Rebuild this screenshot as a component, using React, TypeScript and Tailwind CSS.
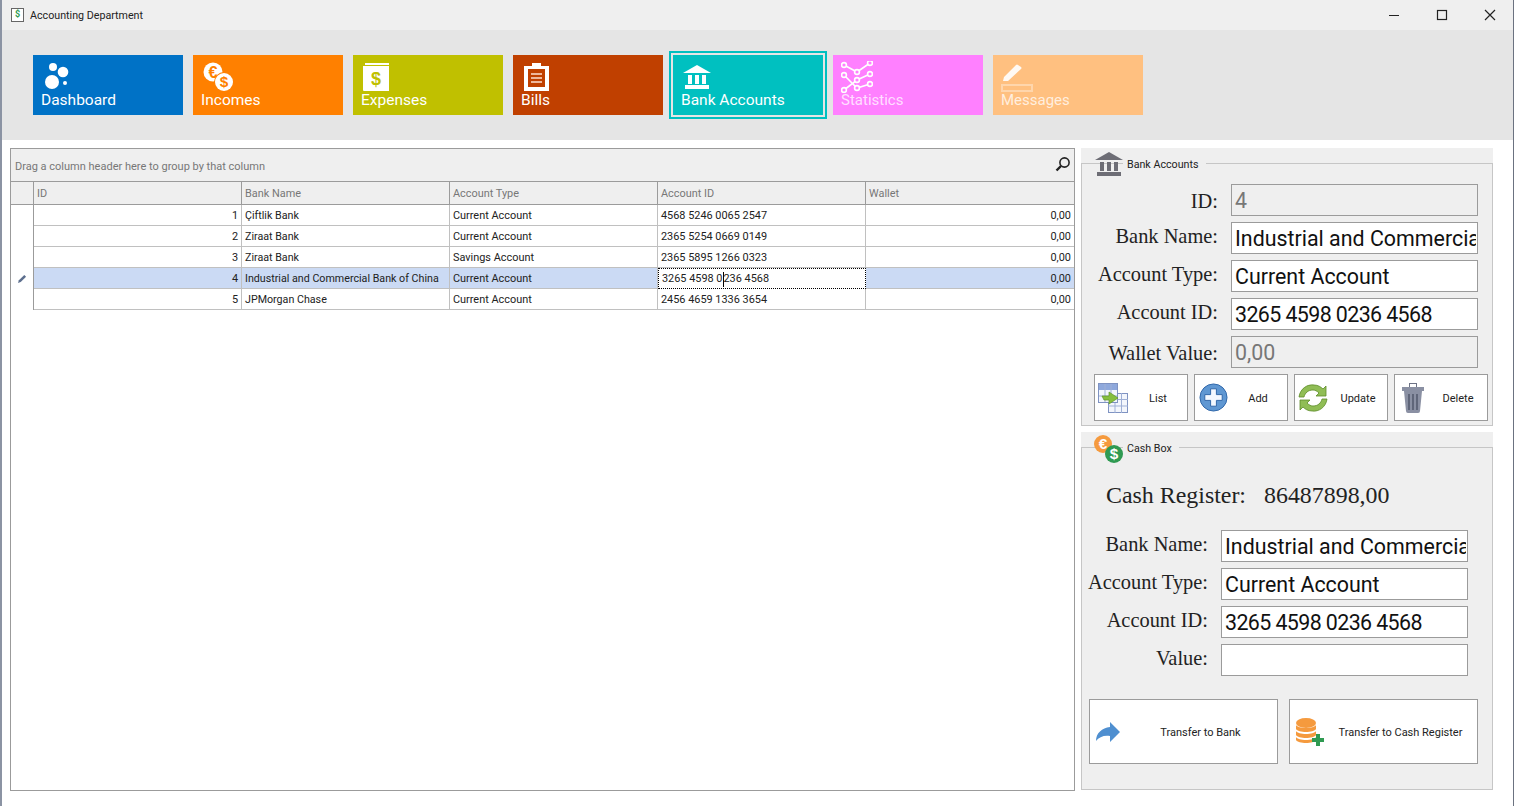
import type { ReactNode } from "react";

const uiFont = "font-['Roboto',sans-serif]";
const serifFont = "font-['Liberation_Serif',serif]";

const rows = [
  { id: 1, bank: "Çiftlik Bank", type: "Current Account", account: "4568 5246 0065 2547" },
  { id: 2, bank: "Ziraat Bank", type: "Current Account", account: "2365 5254 0669 0149" },
  { id: 3, bank: "Ziraat Bank", type: "Savings Account", account: "2365 5895 1266 0323" },
  { id: 4, bank: "Industrial and Commercial Bank of China", type: "Current Account", account: "3265 4598 0236 4568" },
  { id: 5, bank: "JPMorgan Chase", type: "Current Account", account: "2456 4659 1336 3654" }
];

const gridCols = "grid grid-cols-[23px_208px_208px_208px_208px_1fr]";

function Coin({ cx, cy, r, fill, ink, glyph }: { cx: number; cy: number; r: number; fill: string; ink: string; glyph: string }) {
  return (
    <g>
      <circle cx={cx} cy={cy} r={r} fill={fill} />
      <text x={cx} y={cy + r * 0.6} textAnchor="middle" fontSize={r * 1.7} fontWeight="700" fontFamily="Liberation Sans" fill={ink}>
        {glyph}
      </text>
    </g>
  );
}

function BankIcon({ color, className }: { color: string; className: string }) {
  return (
    <svg viewBox="0 0 28 24" className={className} fill={color}>
      <path d="M14 0 28 8H0Z" />
      <rect x="5" y="10" width="4" height="9" />
      <rect x="12" y="10" width="4" height="9" />
      <rect x="19" y="10" width="4" height="9" />
      <rect x="2" y="20" width="24" height="4" />
    </svg>
  );
}

function StatsIcon() {
  const nodes = [[3, 4], [16, 11], [29, 2], [3, 14], [16, 27], [29, 23], [3, 29], [16, 19], [29, 13]];
  return (
    <svg viewBox="0 0 32 32" className="ml-0 h-8 w-8 shrink-0" fill="none" stroke="white" strokeWidth="1.6">
      <path d="M3 4 16 11 29 2M3 14 16 27 29 23M3 29 16 19 29 13" />
      {nodes.map(([x, y]) => (
        <circle key={`${x}-${y}`} cx={x} cy={y} r="2.4" fill="#ff80ff" />
      ))}
    </svg>
  );
}

function Tile({ label, color, icon, active }: { label: string; color: string; icon: ReactNode; active?: boolean }) {
  return (
    <div className={`flex h-[60px] w-[150px] flex-col pl-2 text-white ${color} ${active ? "outline-2 outline-offset-2 outline-[#00c0c0]" : ""}`}>
      <div className="mt-[8px] flex h-[28px] items-center">{icon}</div>
      <div className={`mt-[-1px] text-[15.5px] leading-[20px] ${label === "Statistics" || label === "Messages" ? "text-[15px] text-white/75" : ""}`}>{label}</div>
    </div>
  );
}

function Field({ label, value, disabled, numeric }: { label: string; value: string; disabled?: boolean; numeric?: boolean }) {
  return (
    <div className="flex h-[32px] items-center justify-end gap-[13px]">
      <span className={`${serifFont} text-[20.4px] text-[#222] ${disabled ? "pt-[2px]" : "pb-[3px]"}`}>{label}</span>
      <input
        readOnly
        value={value}
        className={`h-[32px] w-[247px] border border-[#9b9b9b] pl-[3px] pr-[1px] pt-[2px] text-[21.4px] outline-none ${numeric ? "tracking-[-0.6px]" : ""} ${disabled ? "bg-[#efefef] text-[#777]" : "bg-white text-[#111]"}`}
      />
    </div>
  );
}

function GroupBox({ title, icon, className, children }: { title: string; icon: ReactNode; className: string; children: ReactNode }) {
  return (
    <section className={`relative bg-[#efefef] pt-[15px] ${className}`}>
      <div className="absolute left-[12px] top-0 flex h-[30px] items-start">
        {icon}
        <span className="mt-[9px] bg-[#efefef] pl-[4px] pr-[7px] pt-[1px] text-[10.7px] leading-[14px] text-[#222]">{title}</span>
      </div>
      <div className="h-full border border-[#c6c6c6]">{children}</div>
    </section>
  );
}

function ActionButton({ label, icon }: { label: string; icon: ReactNode }) {
  return (
    <button className="flex h-[47px] w-[94px] items-center border border-[#9b9b9b] bg-white text-[11px] text-[#222]">
      <span className="flex w-[36px] shrink-0 justify-center">{icon}</span>
      <span className="flex-1 pl-[4px] pr-[6px] pt-[3px] text-center">{label}</span>
    </button>
  );
}

function TransferButton({ label, icon }: { label: string; icon: ReactNode }) {
  return (
    <button className="flex h-[65px] w-[189px] items-center border border-[#9b9b9b] bg-white text-[11px] text-[#222]">
      <span className="flex w-[40px] shrink-0 justify-center">{icon}</span>
      <span className="flex-1 pl-[4px] pr-[10px] pt-[3px] text-center">{label}</span>
    </button>
  );
}

function AccountsGrid() {
  const headCell = "border-r border-[#9b9b9b] px-[3px] pt-[2px] text-[#777]";
  const cell = "border-r border-b border-[#c0c0c0] px-[3px] pt-[2px] truncate";
  return (
    <div className="h-[643px] w-[1065px] border border-[#9b9b9b] text-[10.9px] leading-[18px] text-[#222]">
      <div className="flex h-[33px] items-center justify-between border-b border-[#9b9b9b] bg-[#efefef] pl-[4px] pr-[3px] text-[11px] text-[#777]">
        <span className="pt-[3px]">Drag a column header here to group by that column</span>
        <svg viewBox="0 0 16 16" className="mb-[2px] h-[16px] w-[16px]" fill="none" stroke="#222" strokeWidth="1.6">
          <circle cx="9.5" cy="6.5" r="4.6" />
          <path d="M6 10 1.5 14.5" strokeWidth="2.4" />
        </svg>
      </div>
      <div className={`${gridCols} h-[23px] border-b border-[#9b9b9b] bg-[#efefef] leading-[20px]`}>
        <div className="border-r border-[#9b9b9b]" />
        <div className={headCell}>ID</div>
        <div className={headCell}>Bank Name</div>
        <div className={headCell}>Account Type</div>
        <div className={headCell}>Account ID</div>
        <div className="px-[3px] pt-[2px] text-[#777]">Wallet</div>
      </div>
      {rows.map((row) => {
        const selected = row.id === 4;
        const bg = selected ? "bg-[#cbdaf4]" : "bg-white";
        return (
          <div key={row.id} className={`${gridCols} h-[21px]`}>
            <div className="flex items-center justify-center border-r border-[#9b9b9b]">
              {selected && (
                <svg viewBox="0 0 10 10" className="h-[9px] w-[9px]" fill="#5d6f8e">
                  <path d="M0 10 1 7 7 1 9 3 3 9Z" />
                </svg>
              )}
            </div>
            <div className={`${cell} ${bg} text-right`}>{row.id}</div>
            <div className={`${cell} ${bg} text-[10.7px]`}>{row.bank}</div>
            <div className={`${cell} ${bg}`}>{row.type}</div>
            {selected ? (
              <div className="border border-dotted border-black bg-white px-[3px] pt-[1px]">
                3265 4598 0<span className="inline-block h-[15px] w-px bg-black align-middle" />236 4568
              </div>
            ) : (
              <div className={`${cell} ${bg}`}>{row.account}</div>
            )}
            <div className={`border-b border-[#c0c0c0] px-[3px] pt-[2px] text-right ${bg}`}>0,00</div>
          </div>
        );
      })}
    </div>
  );
}

export default function App() {
  return (
    <div className={`${uiFont} h-[806px] w-[1514px] overflow-hidden border-l-2 border-r border-l-[#8b93a3] border-r-[#6b7280] bg-white`}>
      <header className="flex h-[30px] items-center bg-[#efefef] pl-[9px] text-[10.7px] text-[#222]">
        <div className="flex h-[14px] w-[13px] items-center justify-center border border-[#666] bg-white text-[9px] font-bold text-[#2f9a52]">$</div>
        <span className="ml-[6px] pt-[2px]">Accounting Department</span>
        <div className="ml-auto flex items-center">
          <svg viewBox="0 0 12 12" className="h-[12px] w-[12px]" stroke="#222" strokeWidth="1"><path d="M1 6.5h10" /></svg>
          <svg viewBox="0 0 12 12" className="ml-[36px] h-[12px] w-[12px]" fill="none" stroke="#222" strokeWidth="1.2"><rect x="1.5" y="1.5" width="9" height="9" /></svg>
          <svg viewBox="0 0 12 12" className="ml-[36px] mr-[17px] h-[12px] w-[12px]" stroke="#222" strokeWidth="1.2"><path d="M1 1 11 11M11 1 1 11" /></svg>
        </div>
      </header>

      <nav className="flex h-[110px] items-start gap-[10px] bg-[#e5e5e5] pl-[31px] pt-[25px]">
        <Tile
          label="Dashboard"
          color="bg-[#0072c6]"
          icon={
            <svg viewBox="0 0 28 28" className="h-[28px] w-[28px] shrink-0" fill="white">
              <circle cx="11" cy="19" r="7" />
              <circle cx="12" cy="4" r="4" />
              <circle cx="22" cy="9" r="5.3" />
              <circle cx="24" cy="20" r="2" />
            </svg>
          }
        />
        <Tile
          label="Incomes"
          color="bg-[#ff8000]"
          icon={
            <svg viewBox="0 0 30 30" className="ml-[2px] h-[30px] w-[30px] shrink-0">
              <Coin cx={10} cy={10} r={9.5} fill="white" ink="#ff8000" glyph="€" />
              <circle cx={21} cy={20} r={10} fill="#ff8000" />
              <Coin cx={21} cy={20} r={9} fill="white" ink="#ff8000" glyph="$" />
            </svg>
          }
        />
        <Tile
          label="Expenses"
          color="bg-[#c0c000]"
          icon={
            <svg viewBox="0 0 26 28" className="ml-[2px] h-[28px] w-[26px] shrink-0">
              <rect x="2" y="0" width="24" height="2" fill="white" />
              <path d="M0 3h26v25H1q-1 0-1-1Z" fill="white" />
              <text x="13" y="22" textAnchor="middle" fontSize="18" fontWeight="700" fontFamily="Liberation Sans" fill="#c0c000">$</text>
            </svg>
          }
        />
        <Tile
          label="Bills"
          color="bg-[#c04000]"
          icon={
            <svg viewBox="0 0 25 28" className="ml-[3px] h-[28px] w-[25px] shrink-0">
              <path d="M0 3h8V0h9v3h8v25H0Z" fill="white" />
              <rect x="4" y="6" width="17" height="18" fill="#c04000" />
              <rect x="8" y="0" width="9" height="6" fill="white" />
              <path d="M7 11h11M7 15h11M7 19h11" stroke="#eeb79b" strokeWidth="2" />
            </svg>
          }
        />
        <Tile label="Bank Accounts" color="bg-[#00c0c0]" active icon={<BankIcon color="white" className="ml-[2px] h-[24px] w-[28px] shrink-0" />} />
        <Tile label="Statistics" color="bg-[#ff80ff]" icon={<StatsIcon />} />
        <Tile
          label="Messages"
          color="bg-[#ffc080]"
          icon={
            <svg viewBox="0 0 32 28" className="h-[28px] w-[32px] shrink-0 translate-y-[1px]">
              <path d="M2 17 3 13 15 1q1-1 2 0l3 2q1 1 0 2L7 17Z" fill="white" fillOpacity="0.9" />
              <rect x="1" y="21" width="30" height="6" fill="none" stroke="white" strokeOpacity="0.35" strokeWidth="2" />
            </svg>
          }
        />
      </nav>

      <main className="flex gap-[6px] pl-[8px] pt-[8px]">
        <AccountsGrid />
        <aside className="flex w-[412px] flex-col gap-[6px]">
          <GroupBox
            title="Bank Accounts"
            className="h-[278px]"
            icon={
              <div className="ml-[2px] mt-[4px]">
                <BankIcon color="#6d6d75" className="h-[24px] w-[28px]" />
              </div>
            }
          >
            <div className="flex flex-col gap-[6px] pr-[14px] pt-[20px]">
              <Field label="ID:" value="4" disabled />
              <Field label="Bank Name:" value="Industrial and Commercial Bank of China" />
              <Field label="Account Type:" value="Current Account" />
              <Field label="Account ID:" value="3265 4598 0236 4568" numeric />
              <Field label="Wallet Value:" value="0,00" disabled />
            </div>
            <div className="ml-[12px] mt-[6px] flex gap-[6px]">
              <ActionButton
                label="List"
                icon={
                  <svg viewBox="0 0 30 30" className="h-[30px] w-[30px]">
                    <rect x="10.5" y="10.5" width="19" height="19" fill="#f3f6fc" stroke="#7f93c2" />
                    <path d="M10 16.5h20M10 23h20M17 10v20M23.5 10v20" stroke="#9fb0d6" />
                    <rect x="0.5" y="0.5" width="19" height="19" fill="#f3f6fc" stroke="#7f93c2" />
                    <rect x="1" y="1" width="18" height="6" fill="#8ea8dc" />
                    <path d="M1 13h18M7 1v18M13 1v18" stroke="#9fb0d6" />
                    <path d="M4 13h7v-4l9 6-9 6v-4H6Z" fill="#86bf3f" stroke="#5f9428" strokeWidth="0.7" />
                  </svg>
                }
              />
              <ActionButton
                label="Add"
                icon={
                  <svg viewBox="0 0 30 30" className="h-[29px] w-[29px]">
                    <circle cx="15" cy="15" r="14" fill="#5f97d2" stroke="#2f66a8" />
                    <path d="M12 6h6v6h6v6h-6v6h-6v-6H6v-6h6Z" fill="#f3f8ff" stroke="#2f66a8" />
                  </svg>
                }
              />
              <ActionButton
                label="Update"
                icon={
                  <svg viewBox="0 0 30 28" className="h-[28px] w-[30px]" fill="#90bd55" stroke="#5d8c2a" strokeWidth="0.8">
                    <path d="M1 13C2 5 9 0 16 1c4 0 7 2 9 4l3-3v10H18l3-3c-2-2-4-3-6-3-5 0-8 3-9 7Z" />
                    <path d="M29 15c-1 8-8 13-15 12-4 0-7-2-9-4l-3 3V16h10l-3 3c2 2 4 3 6 3 5 0 8-3 9-7Z" />
                  </svg>
                }
              />
              <ActionButton
                label="Delete"
                icon={
                  <svg viewBox="0 0 22 30" className="h-[30px] w-[22px]">
                    <rect x="7.5" y="0.5" width="7" height="4" fill="none" stroke="#6d7386" />
                    <path d="M0 4h22v4H0Z" fill="#8a90a3" />
                    <path d="M2 8h18l-2 20q0 2-2 2H6q-2 0-2-2Z" fill="#8a90a3" />
                    <path d="M7 11v16M11 11v16M15 11v16" stroke="#4f5568" strokeWidth="1.4" />
                  </svg>
                }
              />
            </div>
          </GroupBox>

          <GroupBox
            title="Cash Box"
            className="h-[358px]"
            icon={
              <svg viewBox="0 0 30 30" className="mt-[2px] h-[30px] w-[30px] shrink-0">
                <Coin cx={10} cy={10} r={9} fill="#f59a3e" ink="white" glyph="€" />
                <Coin cx={21} cy={20} r={9} fill="#2f9a52" ink="white" glyph="$" />
              </svg>
            }
          >
            <div className={`${serifFont} flex h-[59px] items-center pl-[24px] pt-[37px] text-[23.9px] text-[#222]`}>
              <span>Cash Register:</span>
              <span className="ml-[18px]">86487898,00</span>
            </div>
            <div className="flex flex-col gap-[6px] pr-[24px] pt-[23px]">
              <Field label="Bank Name:" value="Industrial and Commercial Bank of China" />
              <Field label="Account Type:" value="Current Account" />
              <Field label="Account ID:" value="3265 4598 0236 4568" numeric />
              <Field label="Value:" value="" />
            </div>
            <div className="ml-[7px] mt-[23px] flex gap-[11px]">
              <TransferButton
                label="Transfer to Bank"
                icon={
                  <svg viewBox="0 0 24 20" className="-ml-[4px] h-[20px] w-[24px]">
                    <path d="M14 0 24 10 14 20v-6C8 13 3 15 0 19c0-8 6-13 14-14Z" fill="#4f8fd0" />
                  </svg>
                }
              />
              <TransferButton
                label="Transfer to Cash Register"
                icon={
                  <svg viewBox="0 0 28 28" className="h-[28px] w-[28px]">
                    <ellipse cx="10" cy="5" rx="10" ry="5" fill="#f59a3e" />
                    <path d="M0 7c2 4 18 4 20 0v4c-2 4-18 4-20 0ZM0 13c2 4 18 4 20 0v4c-2 4-18 4-20 0ZM0 19c2 4 18 4 20 0v3c-2 4-18 4-20 0Z" fill="#f59a3e" />
                    <path d="M20 16h4v4h4v4h-4v4h-4v-4h-4v-4h4Z" fill="#2f9a52" />
                  </svg>
                }
              />
            </div>
          </GroupBox>
        </aside>
      </main>
    </div>
  );
}
